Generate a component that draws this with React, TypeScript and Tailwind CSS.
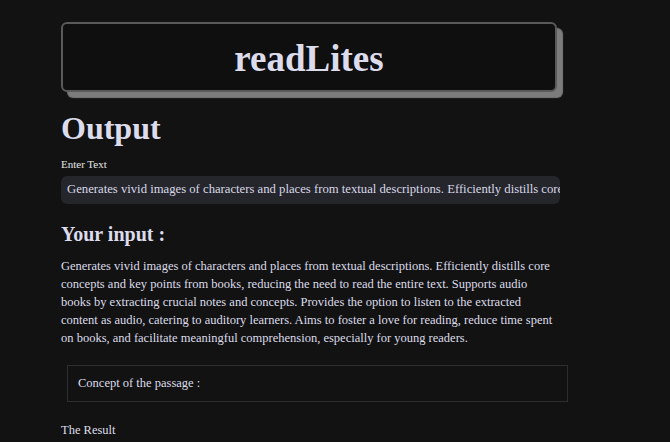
export default function App() {
  const passage =
    "Generates vivid images of characters and places from textual descriptions. Efficiently distills core concepts and key points from books, reducing the need to read the entire text. Supports audio books by extracting crucial notes and concepts. Provides the option to listen to the extracted content as audio, catering to auditory learners. Aims to foster a love for reading, reduce time spent on books, and facilitate meaningful comprehension, especially for young readers.";

  return (
    <div className="min-h-[442px] h-[442px] overflow-hidden bg-[#121212] font-['Liberation_Serif',serif] text-[#dcdcea]">
      <div className="ml-[61px] w-[499px] pt-[22px]">
        {/* title card */}
        <div className="flex h-[70px] w-[496px] items-center justify-center rounded-[6px] border-2 border-[#5a5a5a] bg-[#0f0f0f] shadow-[6px_6px_1px_#7c7c7c]">
          <h1 className="mt-[3px] text-[37px] font-bold leading-none text-[#dcdcec]">readLites</h1>
        </div>

        <h2 className="mt-[16px] text-[32px] font-bold leading-[40px] text-[#dcdcec]">Output</h2>

        <label className="mt-[9px] block text-[11px] leading-[14px] text-[#e6e6e6]">Enter Text</label>
        <div className="mt-[5px] flex h-[28px] items-center overflow-hidden whitespace-nowrap rounded-[6px] bg-[#25262c] pl-[6px] text-[12.7px] text-[#d8d8e6]">
          {passage}
        </div>

        <h3 className="mt-[16px] text-[20px] font-semibold leading-[28px] text-[#dcdcec]">Your input :</h3>
        <p className="mt-[9px] text-[12.5px] leading-[18px] text-[#dcdcea]">{passage}</p>

        <div className="ml-[6px] mt-[18px] flex h-[37px] w-[501px] items-center border border-[#2e2e2e] px-[10px] text-[12.5px] text-[#dcdcea]">
          Concept of the passage :
        </div>

        <p className="mt-[19px] text-[12.5px] leading-[18px] text-[#dcdcea]">The Result</p>
      </div>
    </div>
  );
}
